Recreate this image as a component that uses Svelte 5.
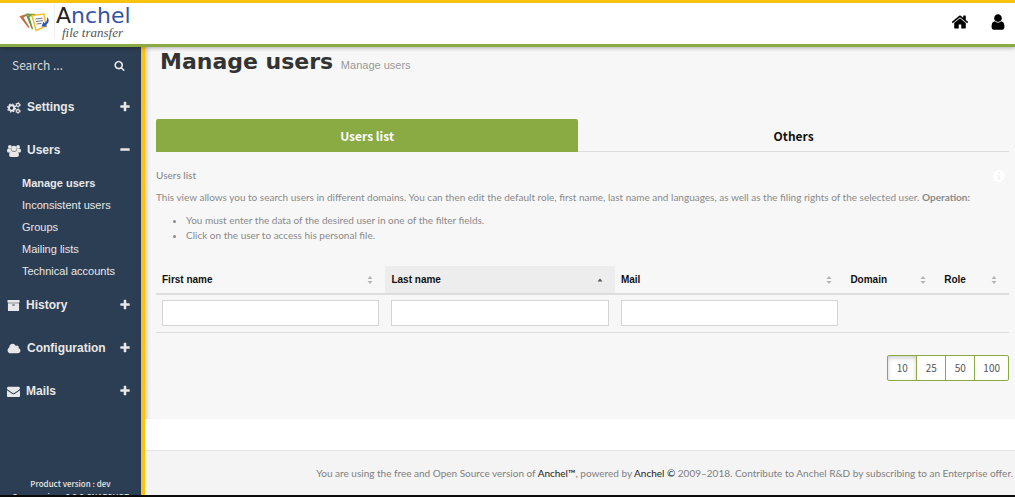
<script>
  const plus = 'M1600 736v192q0 40-28 68t-68 28h-416v416q0 40-28 68t-68 28h-192q-40 0-68-28t-28-68v-416h-416q-40 0-68-28t-28-68v-192q0-40 28-68t68-28h416v-416q0-40 28-68t68-28h192q40 0 68 28t28 68v416h416q40 0 68 28t28 68z';
  const minus = 'M1600 736v192q0 40-28 68t-68 28h-1216q-40 0-68-28t-28-68v-192q0-40 28-68t68-28h1216q40 0 68 28t28 68z';
  const archive = 'M1088 832q0-26-19-45t-45-19h-256q-26 0-45 19t-19 45 19 45 45 19h256q26 0 45-19t19-45zm576-192v960q0 26-19 45t-45 19h-1408q-26 0-45-19t-19-45v-960q0-26 19-45t45-19h1408q26 0 45 19t19 45zm64-448v256q0 26-19 45t-45 19h-1536q-26 0-45-19t-19-45v-256q0-26 19-45t45-19h1536q26 0 45 19t19 45z';
  const cloud = 'M1984 1152q0 159-112.5 271.5t-271.5 112.5h-1088q-185 0-316.5-131.5t-131.5-316.5q0-132 71-241.5t187-163.5q-2-28-2-43 0-212 150-362t362-150q158 0 286.5 88t187.5 230q70-62 166-62 106 0 181 75t75 181q0 75-41 138 129 30 213 134.5t84 239.5z';
  const mail = 'M1792 710v794q0 66-47 113t-113 47h-1472q-66 0-113-47t-47-113v-794q44 49 101 87 362 246 497 345 57 42 92.5 65.5t94.5 48 110 24.5h2q51 0 110-24.5t94.5-48 92.5-65.5q170-123 498-345 57-39 100-87zm0-294q0 79-49 151t-122 123q-376 261-468 325-10 7-42.5 31t-54 38.5-52 32.5-57.5 27-50 9h-2q-23 0-50-9t-57.5-27-52-32.5-54-38.5-42.5-31q-91-64-262-182.5t-205-142.5q-62-42-117-115.5t-55-136.5q0-78 41.5-130t118.5-52h1472q65 0 112.5 47t47.5 113z';

  const pages = ['Manage users', 'Inconsistent users', 'Groups', 'Mailing lists', 'Technical accounts'];
  const menu = [
    { name: 'Settings' },
    { name: 'Users', children: pages },
    { name: 'History' },
    { name: 'Configuration' },
    { name: 'Mails' }
  ];
  const columns = [
    { name: 'First name', cls: 'wide', filter: true },
    { name: 'Last name', cls: 'wide', filter: true, sorted: true },
    { name: 'Mail', cls: 'wide', filter: true },
    { name: 'Domain', cls: 'domain' },
    { name: 'Role', cls: 'role' }
  ];
  const sizes = [10, 25, 50, 100];
  let size = $state(10);
</script>

{#snippet icon(name)}
  {#if name === 'Settings'}
    <svg class="icon" viewBox="0 0 14 12" aria-hidden="true">
      <g fill="none" stroke="currentColor">
        <circle cx="4.6" cy="6" r="2.7" stroke-width="1.9" />
        <circle cx="4.6" cy="6" r="4" stroke-width="1.2" stroke-dasharray="1.57 1.57" />
        <circle cx="11" cy="2.9" r="1.5" stroke-width="1.2" />
        <circle cx="11" cy="2.9" r="2.3" stroke-width=".8" stroke-dasharray="1.2 1.2" />
        <circle cx="11" cy="9.1" r="1.5" stroke-width="1.2" />
        <circle cx="11" cy="9.1" r="2.3" stroke-width=".8" stroke-dasharray="1.2 1.2" />
      </g>
    </svg>
  {:else if name === 'Users'}
    <svg class="icon" viewBox="0 0 14 12" fill="currentColor" aria-hidden="true">
      <circle cx="2.9" cy="1.9" r="1.9" />
      <circle cx="11.1" cy="1.9" r="1.9" />
      <circle cx="7" cy="3.5" r="2.7" />
      <path d="M0 6.200Q0 3.600 1.200 3.400q1.400 1 2.800.4Q4 5.200 5 6.200 3.700 6.200 3 7.400H1.300Q.1 7.400 0 6.200zM14 6.200Q14 3.600 12.800 3.400q-1.400 1-2.800.4Q10 5.200 9 6.200 10.300 6.200 11 7.400h1.700Q13.900 7.400 14 6.200z" />
      <path d="M4.600 6Q7 7.600 9.400 6q2.500.2 2.500 4.200Q11.900 12 10 12H4q-1.900 0-1.900-1.800 0-4 2.500-4.200z" />
    </svg>
  {:else if name === 'Configuration'}
    <svg class="icon" viewBox="64 0 1920 1792" fill="currentColor" aria-hidden="true"><path d={cloud} /></svg>
  {:else}
    <svg class="icon square" viewBox="0 0 1792 1792" fill="currentColor" aria-hidden="true"><path d={name === 'History' ? archive : mail} /></svg>
  {/if}
{/snippet}

<div class="app">
  <header>
    <a class="brand" href="#home">
      <svg class="logo" viewBox="0 0 32 24" aria-hidden="true">
        <path d="M1.500 5.500l8-2.500-6 3.200 6.500 10.300z" fill="#fff" stroke="#c8693f" stroke-width="1.300" />
        <path d="M7.500 3.500h9l-7 1.700 4 13z" fill="#fff" stroke="#6b9a3c" stroke-width="1.400" />
        <path d="M13 4.500l12-1.500 2 12-10 4.500z" fill="#fff" stroke="#f3bd2e" stroke-width="1.500" />
        <path d="M16.500 8l7-.8M17 10.500l7-.8M17.500 13l5-.6" stroke="#69738a" stroke-width="1" />
        <path d="M28 6q4 4-1 8l1.200 1.400-5.700.1 2-4.700 1.200 1.500q3-2.500 2.300-6.300z" fill="#2c55b5" />
      </svg>
      <span class="words"><span class="name"><b>A</b>nchel</span><i>file transfer</i></span>
    </a>
    <nav class="top">
      <a href="#home" aria-label="Home">
        <svg viewBox="0 0 1792 1792" fill="currentColor"><path d="M1472 992v480q0 26-19 45t-45 19h-384v-384h-256v384h-384q-26 0-45-19t-19-45v-480q0-1 .5-3t.5-3l575-474 575 474q1 2 1 6zm223-69l-62 74q-8 9-21 11h-3q-13 0-21-7l-692-577-692 577q-12 8-24 7-13-2-21-11l-62-74q-8-10-7-23.5t11-21.5l719-599q32-26 76-26t76 26l244 204v-195q0-14 9-23t23-9h192q14 0 23 9t9 23v408l219 182q10 8 11 21.5t-7 23.5z" /></svg>
      </a>
      <a href="#account" aria-label="Account">
        <svg viewBox="0 0 1792 1792" fill="currentColor"><path d="M1536 1399q0 109-62.5 187t-150.5 78h-854q-88 0-150.500-78t-62.500-187q0-85 8.500-160.500t31.500-152 58.500-131 94-89 134.500-34.500q131 128 313 128t313-128q76 0 134.500 34.500t94 89 58.500 131 31.500 152 8.500 160.500zm-256-887q0 159-112.500 271.500t-271.500 112.500-271.500-112.500-112.500-271.500 112.500-271.500 271.500-112.500 271.500 112.500 112.500 271.500z" /></svg>
      </a>
    </nav>
  </header>

  <div class="body">
    <aside>
      <form class="search">
        <input type="text" placeholder="Search ..." aria-label="Search" />
        <button type="button" aria-label="Run search">
          <svg viewBox="0 0 1792 1792" fill="currentColor"><path d="M1216 832q0-185-131.500-316.500t-316.500-131.500-316.500 131.500-131.500 316.500 131.500 316.500 316.500 131.500 316.500-131.500 131.500-316.500zm512 832q0 52-38 90t-90 38q-54 0-90-38l-343-342q-179 124-399 124-143 0-273.500-55.500t-225-150-150-225-55.500-273.500 55.500-273.500 150-225 225-150 273.500-55.500 273.500 55.500 225 150 150 225 55.500 273.500q0 220-124 399l343 343q37 37 37 90z" /></svg>
        </button>
      </form>
      <nav>
        {#each menu as item}
          <button class="group" type="button" aria-expanded={!!item.children}>
            {@render icon(item.name)}
            <span>{item.name}</span>
            <svg class="toggle" viewBox="0 0 1792 1792" fill="currentColor" aria-hidden="true"><path d={item.children ? minus : plus} /></svg>
          </button>
          {#if item.children}
            <ul class="sub">
              {#each item.children as page, i}
                <li><a href="#users" class:current={i === 0}>{page}</a></li>
              {/each}
            </ul>
          {/if}
        {/each}
      </nav>
      <div class="version"><p>Product version : dev</p><p>Core version : 2.2.2-SNAPSHOT</p></div>
    </aside>

    <div class="page">
      <main>
        <h1>Manage users <small>Manage users</small></h1>
        <div class="tabs" role="tablist">
          <button role="tab" type="button" aria-selected="true">Users list</button>
          <button role="tab" type="button" aria-selected="false">Others</button>
        </div>
        <section class="help">
          <div class="head">
            <h2>Users list</h2>
            <svg viewBox="0 0 12 12" aria-hidden="true"><circle cx="6" cy="6" r="6" fill="#fff" /><path d="M5 2h2v1.600H5zM4.300 4.700H7v3.600h.8v1.300H4.300V8.300H5V6h-.7z" fill="#f3f3f3" /></svg>
          </div>
          <p>This view allows you to search users in different domains. You can then edit the default role, first name, last name and languages, as well as the filing rights of the selected user. <b>Operation:</b></p>
          <ul>
            <li>You must enter the data of the desired user in one of the filter fields.</li>
            <li>Click on the user to access his personal file.</li>
          </ul>
        </section>
        <table>
          <thead>
            <tr>
              {#each columns as col}
                <th class={col.cls} class:sorted={col.sorted} aria-sort={col.sorted ? 'ascending' : 'none'}>
                  <div>
                    {col.name}
                    <svg viewBox="0 0 6 8" aria-hidden="true">
                      {#if col.sorted}<path d="M.5 5.500L3 2.500l2.500 3z" fill="#555" />{:else}<path d="M.5 3L3 0l2.500 3zM.5 5L3 8l2.500-3z" fill="#b5b5b5" />{/if}
                    </svg>
                  </div>
                </th>
              {/each}
            </tr>
          </thead>
          <tbody>
            <tr>
              {#each columns as col}
                <td>{#if col.filter}<input type="text" aria-label={col.name} />{/if}</td>
              {/each}
            </tr>
          </tbody>
        </table>
        <div class="pager">
          {#each sizes as n}
            <button type="button" class:active={size === n} onclick={() => (size = n)}>{n}</button>
          {/each}
        </div>
      </main>
      <footer>You are using the free and Open Source version of <a href="#about">Anchel™</a>, powered by <a href="#about">Anchel ©</a> 2009–2018. Contribute to Anchel R&amp;D by subscribing to an Enterprise offer.</footer>
    </div>
  </div>
</div>

<style>
  :global(body) { margin: 0; background: #fff; }
  * { box-sizing: border-box; }
  .app {
    display: flex; flex-direction: column; height: 100vh; overflow: hidden;
    border-bottom: 2px solid #0a0a0a;
    font: 10px/15px Lato, "Open Sans", sans-serif; color: #8a8a8a;
  }
  a { color: inherit; text-decoration: none; }
  button, input { font: inherit; color: inherit; }
  button { border: 0; background: none; padding: 0; cursor: pointer; }
  p, h1, h2, ul { margin: 0; padding: 0; }
  svg { display: block; flex: none; }

  header {
    display: flex; justify-content: space-between; align-items: center; flex: none;
    height: 47px; padding: 0 8px 0 19px; background: #fff; position: relative; z-index: 1;
    border-top: 3px solid #ffc20e; border-bottom: 3px solid #8aaa43;
    box-shadow: 0 1px 4px rgba(0, 0, 0, .3);
  }
  .brand { display: flex; align-items: flex-start; padding-bottom: 6px; }
  .logo { width: 32px; height: 24px; margin-top: 7px; }
  .words { display: flex; flex-direction: column; margin-left: 3px; padding-left: 1px; border-left: 1px solid #eee; }
  .name { font: 22px/24px "DejaVu Sans", sans-serif; color: #3554a5; }
  .name b { font-weight: 400; color: #222; }
  .words i { font: italic 13px/10px "Liberation Serif", serif; color: #555; padding-left: 6px; }
  .top { display: flex; gap: 20px; padding-bottom: 4px; color: #000; }
  .top svg { width: 18px; height: 18px; }

  .body { display: flex; flex: 1; min-height: 0; }
  aside {
    display: flex; flex-direction: column; flex: none; width: 145px; overflow: hidden;
    background: #2c3e53; color: #e8e8e8; border-right: 4px solid #ffc20e;
    font-family: "Liberation Sans", Arial, sans-serif;
  }
  .search { display: flex; align-items: center; height: 39px; padding: 0 16px 3px 12px; flex: none; }
  .search input {
    flex: 1; min-width: 0; border: 0; padding: 0; background: none; outline: 0;
    font: 12px/18px "Noto Sans CJK SC", "Open Sans", sans-serif;
  }
  .search input::placeholder { color: #d5d8dc; opacity: 1; }
  .search svg { width: 11px; height: 11px; }
  .group { display: flex; align-items: center; width: 100%; height: 43px; padding: 0 10px 0 7px; font-size: 12px; font-weight: 700; text-align: left; }
  .group span { flex: 1; margin-left: 6px; }
  .icon { width: 14px; height: 12px; }
  .square { width: 13px; height: 13px; }
  .toggle { width: 12px; height: 12px; margin-bottom: 2px; }
  .sub { list-style: none; padding: 0 0 2px 22px; font-size: 11px; line-height: 22px; }
  .current { font-weight: 700; }
  .version { margin-top: auto; margin-bottom: -8px; text-align: center; font: 500 8px/13px "Noto Sans CJK SC", "Open Sans", sans-serif; white-space: nowrap; }

  .page { flex: 1; min-width: 0; display: flex; flex-direction: column; justify-content: space-between; }
  main { padding: 0 6px 38px 11px; background: #f7f7f7; box-shadow: inset 5px 0 5px -4px rgba(0, 0, 0, .25); }
  h1 { padding: 0 4px; font: 700 22px/30px "DejaVu Sans", Arial, sans-serif; color: #333; }
  small { font: 11px/20px "Liberation Sans", Arial, sans-serif; color: #999; }
  .tabs { display: flex; margin-top: 42px; font-family: "Noto Sans CJK SC", "Open Sans", sans-serif; }
  .tabs button { flex: 1; height: 33px; border-bottom: 1px solid #ddd; font-size: 12px; font-weight: 700; color: #111; }
  .tabs [aria-selected="true"] { flex: 0 0 49.5%; background: #8aaa43; color: #fff; border: 0; border-radius: 2px 2px 0 0; }
  .help { padding-top: 16px; }
  .head { display: flex; justify-content: space-between; align-items: center; padding-right: 4px; }
  .head svg { width: 12px; height: 12px; }
  h2 { font: inherit; font-weight: 500; }
  .help p { margin: 7px 0 8px; }
  .help ul { padding-left: 30px; }

  table { width: 100%; margin-top: 23px; table-layout: fixed; border-collapse: collapse; border-bottom: 1px solid #ddd; }
  th { height: 28px; padding: 0 6px; text-align: left; font: 700 10px/15px "Liberation Sans", Arial, sans-serif; color: #111; border-bottom: 2px solid #ddd; }
  th div { display: flex; justify-content: space-between; align-items: center; }
  th svg { width: 6px; height: 8px; margin-right: 6px; }
  .sorted { background: #ededed; }
  .domain { width: 11%; }
  .role { width: 8.3%; }
  td { height: 38px; padding: 5px 6px; }
  td input { display: block; width: 100%; height: 26px; padding: 0 6px; border: 1px solid #d4d4d4; background: #fff; }
  .pager { display: flex; justify-content: flex-end; margin-top: 22px; font-family: "Noto Sans CJK SC", "Open Sans", sans-serif; }
  .pager button { min-width: 30px; height: 26px; padding: 0 8px; margin-left: -1px; border: 1px solid #8aaa43; background: #fff; color: #555; }
  .pager button:first-child { border-radius: 2px 0 0 2px; }
  .pager button:last-child { border-radius: 0 2px 2px 0; }
  .pager .active { box-shadow: inset 0 2px 4px rgba(0, 0, 0, .2); }

  footer { padding: 15px 2px 14px; border-top: 1px solid #e5e5e5; background: #f4f4f4; text-align: right; color: #808080; }
  footer a { color: #222; }
</style>
